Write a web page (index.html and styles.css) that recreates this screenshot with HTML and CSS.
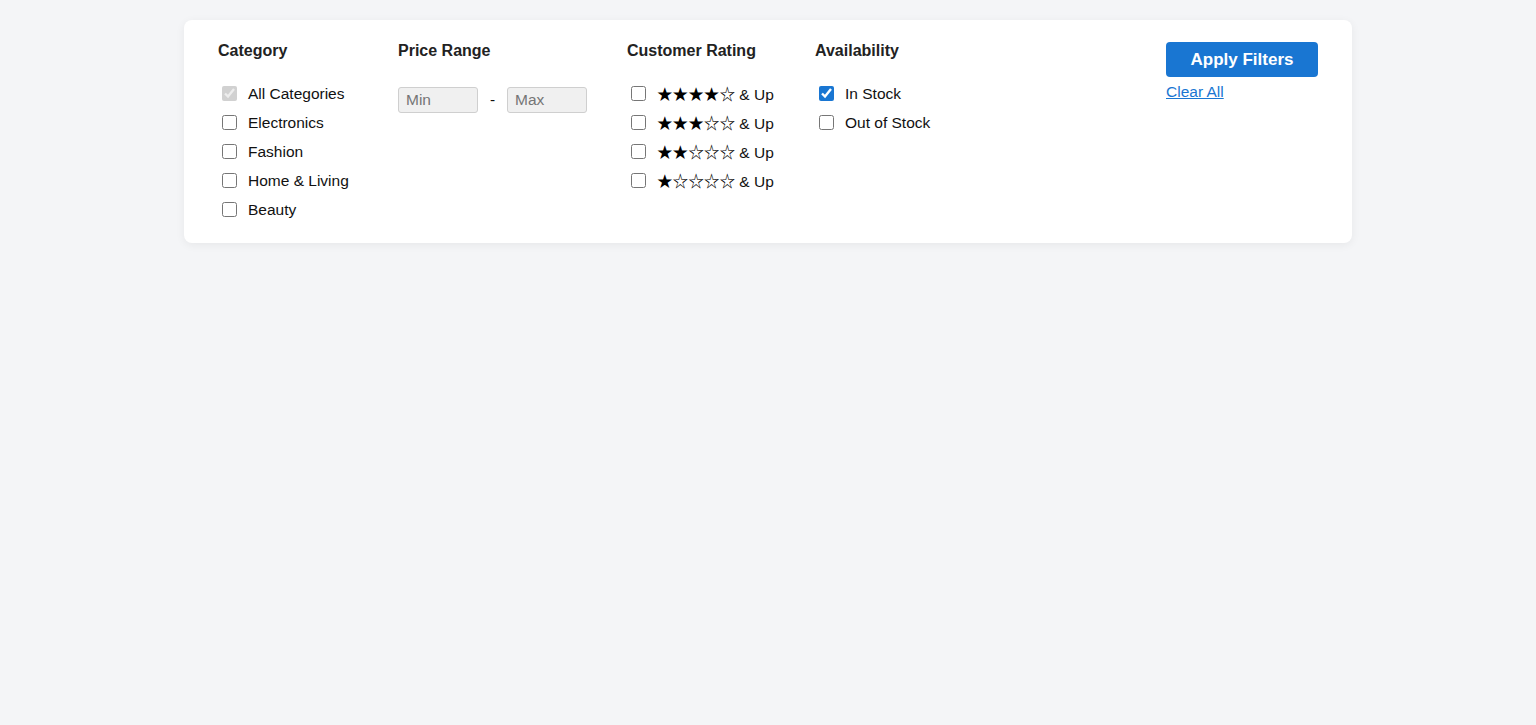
FILE: index.html
```html
<!DOCTYPE html>
<html lang="en">
<head>
<meta charset="utf-8">
<title>Filters</title>
<link rel="stylesheet" href="styles.css">
</head>
<body>
<div class="card">
  <div class="col col-cat">
    <h3 class="title">Category</h3>
    <ul class="list">
      <li class="opt"><input type="checkbox" checked disabled><span>All Categories</span></li>
      <li class="opt"><input type="checkbox"><span>Electronics</span></li>
      <li class="opt"><input type="checkbox"><span>Fashion</span></li>
      <li class="opt"><input type="checkbox"><span>Home &amp; Living</span></li>
      <li class="opt"><input type="checkbox"><span>Beauty</span></li>
    </ul>
  </div>
  <div class="col col-price">
    <h3 class="title">Price Range</h3>
    <div class="range">
      <input class="num" type="text" placeholder="Min" disabled>
      <span class="dash">-</span>
      <input class="num" type="text" placeholder="Max" disabled>
    </div>
  </div>
  <div class="col col-rating">
    <h3 class="title">Customer Rating</h3>
    <ul class="list">
      <li class="opt"><input type="checkbox"><span><span class="stars">★★★★☆</span> &amp; Up</span></li>
      <li class="opt"><input type="checkbox"><span><span class="stars">★★★☆☆</span> &amp; Up</span></li>
      <li class="opt"><input type="checkbox"><span><span class="stars">★★☆☆☆</span> &amp; Up</span></li>
      <li class="opt"><input type="checkbox"><span><span class="stars">★☆☆☆☆</span> &amp; Up</span></li>
    </ul>
  </div>
  <div class="col col-avail">
    <h3 class="title">Availability</h3>
    <ul class="list">
      <li class="opt"><input type="checkbox" checked><span>In Stock</span></li>
      <li class="opt"><input type="checkbox"><span>Out of Stock</span></li>
    </ul>
  </div>
  <div class="col col-actions">
    <button class="apply" type="button">Apply Filters</button>
    <a class="clear" href="#">Clear All</a>
  </div>
</div>
</body>
</html>
```
FILE: styles.css
```css
html, body {
  margin: 0;
  padding: 0;
}
body {
  background: #f4f5f7;
  font-family: "Liberation Sans", Arial, Helvetica, sans-serif;
  color: #111;
  padding: 20px 184px;
}
.card {
  background: #fff;
  border-radius: 8px;
  box-shadow: 0 2px 10px rgba(0, 0, 0, 0.06);
  padding: 21px 34px 23px;
  display: flex;
  gap: 40px;
  align-items: flex-start;
}
.col-cat {
  width: 140px;
}
.col-price {
  width: 189px;
}
.col-rating {
  width: 148px;
}
.title {
  margin: 0 0 22px;
  font-size: 16px;
  line-height: 20px;
  font-weight: bold;
  color: #222;
  white-space: nowrap;
}
.list {
  list-style: none;
  margin: 0;
  padding: 0;
  display: flex;
  flex-direction: column;
  gap: 8px;
}
.opt {
  display: flex;
  align-items: center;
  height: 21px;
  font-size: 15.5px;
  line-height: 21px;
  color: #111;
  white-space: nowrap;
}
.opt input {
  flex: none;
  width: 15px;
  height: 15px;
  margin: 0 11px 0 4px;
  accent-color: #1976d2;
}
.stars {
  font-family: "Noto Sans CJK SC", "DejaVu Sans", sans-serif;
  font-size: 15.6px;
  letter-spacing: 0;
  color: #000;
}
.range {
  display: flex;
  align-items: center;
  gap: 10px;
  padding-top: 4px;
}
.num {
  box-sizing: border-box;
  width: 80px;
  height: 26px;
  border: 1px solid #cfcfcf;
  border-radius: 3px;
  background: #f0f0f0;
  padding: 0 7px;
  font-family: "Liberation Sans", Arial, sans-serif;
  font-size: 15.5px;
}
.num::placeholder {
  color: #757575;
}
.dash {
  font-size: 15.5px;
  width: 9px;
  text-align: center;
}
.col-actions {
  margin-left: auto;
  display: flex;
  flex-direction: column;
  align-items: flex-start;
  padding-top: 1px;
}
.apply {
  width: 152px;
  height: 35px;
  border: none;
  border-radius: 4px;
  background: #1976d2;
  color: #fff;
  font-family: "Liberation Sans", Arial, sans-serif;
  font-size: 17px;
  font-weight: bold;
  cursor: pointer;
}
.clear {
  margin-top: 6px;
  font-size: 15.5px;
  color: #1976d2;
  text-decoration: underline;
}
```
